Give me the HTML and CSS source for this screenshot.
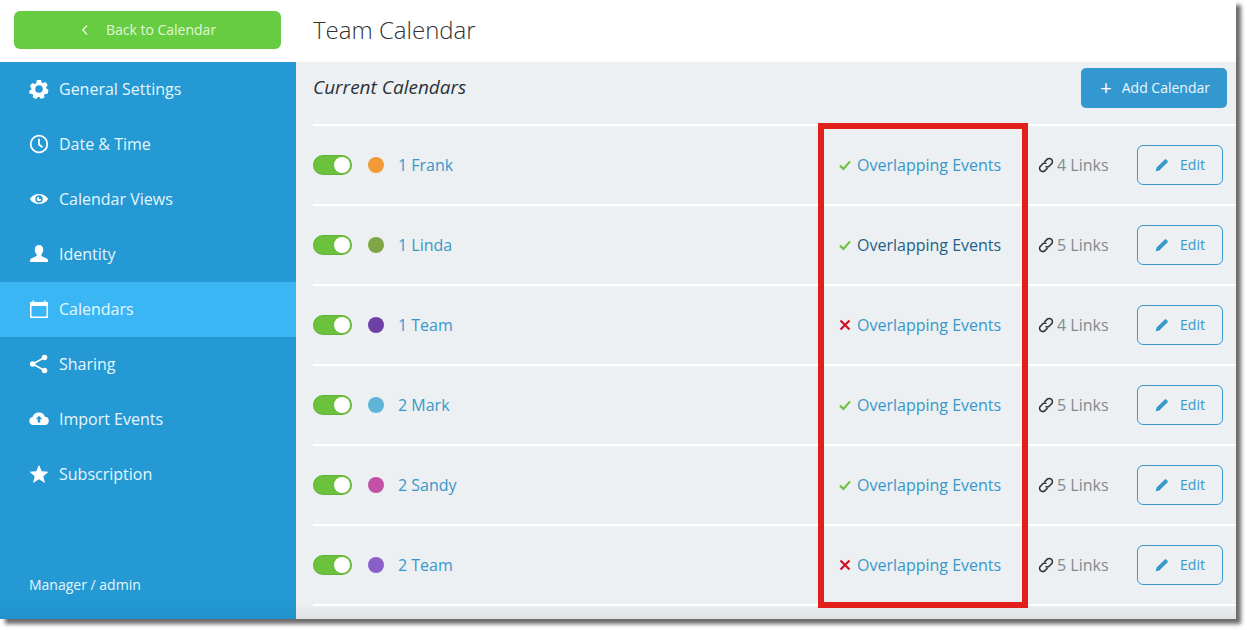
FILE: index.html
```html
<!DOCTYPE html>
<html lang="en">
<head>
    <meta charset="UTF-8">
    <title>Team Calendar</title>
    <link rel="stylesheet" href="styles.css">
</head>
<body>
    <svg class="defs" width="0" height="0">
        <symbol id="i-check" viewBox="0 0 12 12"><path d="M1 6.6 4.4 10 11 2.4" fill="none" stroke="currentColor" stroke-width="2.2"/></symbol>
        <symbol id="i-cross" viewBox="0 0 12 12"><path d="M1.5 1.5 10.5 10.5M10.5 1.5 1.5 10.5" fill="none" stroke="currentColor" stroke-width="2.2"/></symbol>
        <symbol id="i-link" viewBox="1 1 14 14"><g fill="none" stroke="currentColor" stroke-width="1.3"><path d="M6.6 5.4 8.9 3.1a2.7 2.7 0 0 1 3.9 0 2.7 2.7 0 0 1 0 3.9L11 8.9a2.7 2.7 0 0 1-3.4.3"/><path d="M9.4 10.6 7.1 12.9a2.7 2.7 0 0 1-3.9 0 2.7 2.7 0 0 1 0-3.9L5 7.1a2.7 2.7 0 0 1 3.4-.3"/></g></symbol>
        <symbol id="i-pencil" viewBox="0 0 14 14"><path d="M.8 13.2 1.6 9.6 9.8 1.4a1 1 0 0 1 1.4 0l1.4 1.4a1 1 0 0 1 0 1.4L4.4 12.4Z" fill="currentColor"/></symbol>
    </svg>

    <div class="window">
        <aside class="sidebar">
            <div class="back-wrap">
                <a class="back-btn">
                    <svg class="back-icon" viewBox="0 0 8 12"><path d="M6 1.5 1.8 6 6 10.5" fill="none" stroke="currentColor" stroke-width="1.5"/></svg>
                    Back to Calendar
                </a>
            </div>
            <nav class="menu">
                <a class="menu-item">
                    <svg class="menu-icon" viewBox="0 0 20 20"><path fill-rule="evenodd" fill="currentColor" d="M8 1h4l.6 2.5 1.4.6 2.3-1.2 2.5 3-1.600 2 .2 1.600 2.100 1.400-.9 3.800-2.600.2-1 1.200.5 2.500-3.600 1.400-1.500-2.100h-1.600l-1.500 2.100-3.600-1.400.5-2.500-1-1.200-2.600-.2L.1 11.900l2.100-1.400.2-1.600-1.600-2 2.500-3L5.600 5.100 7 4.500ZM10 6.200a3.800 3.800 0 1 0 0 7.600 3.800 3.800 0 0 0 0-7.600Z"/></svg>
                    General Settings
                </a>
                <a class="menu-item">
                    <svg class="menu-icon" viewBox="0 0 20 20"><circle cx="10" cy="10" r="8.300" fill="none" stroke="currentColor" stroke-width="1.800"/><path d="M10 4.800V10.500L13.600 13.400" fill="none" stroke="currentColor" stroke-width="1.800"/></svg>
                    Date &amp; Time
                </a>
                <a class="menu-item">
                    <svg class="menu-icon" viewBox="0 0 20 20"><path fill-rule="evenodd" fill="currentColor" d="M.8 10C3 6.500 6.300 4.900 10 4.900s7 1.600 9.200 5.100C17 13.500 13.700 15.100 10 15.100S3 13.500.8 10ZM10 6.300a3.700 3.700 0 1 0 0 7.400 3.700 3.700 0 0 0 0-7.400Z"/><path fill="currentColor" d="M10 7.800a2.200 2.200 0 1 0 2.200 2.200H10Z"/></svg>
                    Calendar Views
                </a>
                <a class="menu-item">
                    <svg class="menu-icon" viewBox="0 0 20 20"><path fill="currentColor" d="M10 1c2.700 0 4.200 2 4.200 4.600 0 2-.8 3.800-1.900 4.800-.3.900.1 1.600 1.100 2.100 2 .9 5 1.700 5.600 3.500V18H1v-2c.6-1.800 3.600-2.600 5.600-3.500 1-.5 1.400-1.200 1.100-2.100-1.100-1-1.900-2.800-1.900-4.800C5.800 3 7.300 1 10 1Z"/></svg>
                    Identity
                </a>
                <a class="menu-item active">
                    <svg class="menu-icon" viewBox="0 0 20 20"><path fill-rule="evenodd" fill="currentColor" d="M1 3H3.500V1.500H5V3H15V1.500H16.500V3H19V19H1ZM2.500 7V17.500H17.500V7Z"/></svg>
                    Calendars
                </a>
                <a class="menu-item">
                    <svg class="menu-icon" viewBox="0 0 20 20"><g fill="currentColor"><circle cx="15.500" cy="3.500" r="2.800"/><circle cx="3.700" cy="10" r="2.800"/><circle cx="15.500" cy="16.500" r="2.800"/></g><path d="M15.500 3.500 3.700 10 15.500 16.500" fill="none" stroke="currentColor" stroke-width="1.600"/></svg>
                    Sharing
                </a>
                <a class="menu-item">
                    <svg class="menu-icon" viewBox="0 0 20 20"><path fill-rule="evenodd" fill="currentColor" d="M4.500 16a4 4 0 0 1-1-7.900A6.700 6.700 0 0 1 10 3.500a6 6 0 0 1 5.800 4.300A4.100 4.100 0 0 1 15.500 16ZM10 6.800 6.700 10.300H8.800V13.500H11.200V10.300H13.300Z"/></svg>
                    Import Events
                </a>
                <a class="menu-item">
                    <svg class="menu-icon" viewBox="0 0 20 20"><path fill="currentColor" d="M10 .8 12.700 7.200 19.500 7.700 14.300 12.200 16 19 10 15.300 4 19 5.700 12.200.5 7.700 7.300 7.200Z"/></svg>
                    Subscription
                </a>
            </nav>
            <div class="user">Manager / admin</div>
        </aside>

        <main class="main">
            <header class="topbar"><h1>Team Calendar</h1></header>
            <section class="content">
                <div class="content-head">
                    <h2>Current Calendars</h2>
                    <a class="add-btn"><span class="plus">+</span>Add Calendar</a>
                </div>
                <div class="list">
                    <div class="row">
                        <span class="toggle"></span>
                        <span class="dot dot-frank"></span>
                        <a class="name">1 Frank</a>
                        <span class="overlap"><svg class="mark yes"><use href="#i-check"/></svg><a>Overlapping Events</a></span>
                        <span class="links"><svg class="link-icon"><use href="#i-link"/></svg>4 Links</span>
                        <a class="edit-btn"><svg class="pencil"><use href="#i-pencil"/></svg><span class="edit-label">Edit</span></a>
                    </div>
                    <div class="row">
                        <span class="toggle"></span>
                        <span class="dot dot-linda"></span>
                        <a class="name">1 Linda</a>
                        <span class="overlap hover"><svg class="mark yes"><use href="#i-check"/></svg><a>Overlapping Events</a></span>
                        <span class="links"><svg class="link-icon"><use href="#i-link"/></svg>5 Links</span>
                        <a class="edit-btn"><svg class="pencil"><use href="#i-pencil"/></svg><span class="edit-label">Edit</span></a>
                    </div>
                    <div class="row">
                        <span class="toggle"></span>
                        <span class="dot dot-team1"></span>
                        <a class="name">1 Team</a>
                        <span class="overlap"><svg class="mark no"><use href="#i-cross"/></svg><a>Overlapping Events</a></span>
                        <span class="links"><svg class="link-icon"><use href="#i-link"/></svg>4 Links</span>
                        <a class="edit-btn"><svg class="pencil"><use href="#i-pencil"/></svg><span class="edit-label">Edit</span></a>
                    </div>
                    <div class="row">
                        <span class="toggle"></span>
                        <span class="dot dot-mark"></span>
                        <a class="name">2 Mark</a>
                        <span class="overlap"><svg class="mark yes"><use href="#i-check"/></svg><a>Overlapping Events</a></span>
                        <span class="links"><svg class="link-icon"><use href="#i-link"/></svg>5 Links</span>
                        <a class="edit-btn"><svg class="pencil"><use href="#i-pencil"/></svg><span class="edit-label">Edit</span></a>
                    </div>
                    <div class="row">
                        <span class="toggle"></span>
                        <span class="dot dot-sandy"></span>
                        <a class="name">2 Sandy</a>
                        <span class="overlap"><svg class="mark yes"><use href="#i-check"/></svg><a>Overlapping Events</a></span>
                        <span class="links"><svg class="link-icon"><use href="#i-link"/></svg>5 Links</span>
                        <a class="edit-btn"><svg class="pencil"><use href="#i-pencil"/></svg><span class="edit-label">Edit</span></a>
                    </div>
                    <div class="row">
                        <span class="toggle"></span>
                        <span class="dot dot-team2"></span>
                        <a class="name">2 Team</a>
                        <span class="overlap"><svg class="mark no"><use href="#i-cross"/></svg><a>Overlapping Events</a></span>
                        <span class="links"><svg class="link-icon"><use href="#i-link"/></svg>5 Links</span>
                        <a class="edit-btn"><svg class="pencil"><use href="#i-pencil"/></svg><span class="edit-label">Edit</span></a>
                    </div>
                </div>
            </section>
        </main>

        <div class="callout"></div>
    </div>
</body>
</html>
```

FILE: styles.css
```css
* {
    box-sizing: border-box;
}
body {
    margin: 0;
    height: 630px;
    overflow: hidden;
    background-color: #fff;
    font-family: "Open Sans", "Liberation Sans", sans-serif;
}
.defs {
    position: absolute;
}
.window {
    position: relative;
    display: flex;
    width: 1236px;
    height: 619px;
    box-shadow: 5px 5px 4px rgba(50, 50, 50, 0.72);
}

/* sidebar */
.sidebar {
    display: flex;
    flex-direction: column;
    width: 296px;
    background: linear-gradient(#2499d3 96%, #2093cc);
    color: #e6f6fd;
}
.back-wrap {
    height: 62px;
    padding: 11px 15px 0 14px;
    background-color: #fff;
}
.back-btn {
    display: flex;
    align-items: center;
    justify-content: center;
    height: 38px;
    padding: 0 0 2px 2px;
    border-radius: 6px;
    background-color: #66cc41;
    color: #e2f7d6;
    font-size: 14px;
}
.back-icon {
    width: 8px;
    height: 12px;
    margin: 2px 17px 0 0;
}
.menu {
    flex: 1;
}
.menu-item {
    display: flex;
    align-items: center;
    height: 55px;
    padding: 0 0 2px 29px;
    font-size: 16px;
}
.menu-item.active {
    background-color: #3bb6f5;
}
.menu-icon {
    width: 20px;
    height: 20px;
    margin-right: 10px;
    color: #fff;
}
.user {
    height: 69px;
    padding: 25px 0 0 29px;
    font-size: 14px;
}

/* main */
.main {
    flex: 1;
    display: flex;
    flex-direction: column;
}
.topbar {
    height: 62px;
    padding: 0 0 0 17px;
    background-color: #fff;
}
h1 {
    margin: 0;
    font-size: 24px;
    font-weight: 300;
    line-height: 59px;
    color: #333;
}
.content {
    flex: 1;
    padding-left: 17px;
    background: linear-gradient(#ecf0f2 97%, #e0e3e5);
}
.content-head {
    display: flex;
    justify-content: space-between;
    height: 62px;
    padding: 6px 9px 0 0;
}
h2 {
    margin: 0;
    font-size: 19px;
    font-weight: 400;
    font-style: italic;
    line-height: 38px;
    color: #2b3238;
}
.add-btn {
    display: flex;
    align-items: center;
    height: 40px;
    padding: 0 17px 2px 19px;
    border-radius: 5px;
    background-color: #3498d0;
    color: #eaf6fc;
    font-size: 14px;
}
.plus {
    margin: 2px 10px 0 0;
    color: #fff;
    font-size: 20px;
    line-height: 1;
}
.list {
    border-top: 2px solid #fff;
}
.row {
    display: flex;
    align-items: center;
    height: 80px;
    padding-right: 13px;
    border-bottom: 2px solid #fff;
}
.toggle {
    position: relative;
    width: 39px;
    height: 20px;
    border-radius: 10px;
    background-color: #6cc13d;
    box-shadow: inset 0 0 0 1px rgba(70, 120, 40, 0.2);
}
.toggle::after {
    content: "";
    position: absolute;
    top: 2px;
    right: 2px;
    width: 16px;
    height: 16px;
    border-radius: 50%;
    background-color: #fff;
}
.dot {
    width: 16px;
    height: 16px;
    margin: 0 14px 0 16px;
    border-radius: 50%;
}
.dot-frank { background-color: #f09b37; }
.dot-linda { background-color: #7fa646; }
.dot-team1 { background-color: #6f3fa8; }
.dot-mark { background-color: #5fb4d8; }
.dot-sandy { background-color: #c250a4; }
.dot-team2 { background-color: #8a60c8; }
.name {
    flex: 1;
    font-size: 16px;
    color: #3a97c9;
}
.overlap {
    display: flex;
    align-items: center;
    width: 199px;
    font-size: 16px;
    color: #3a97c9;
}
.overlap.hover {
    color: #245f85;
}
.mark {
    width: 12px;
    height: 12px;
    margin-right: 6px;
}
.mark.yes { color: #6cc13d; }
.mark.no { color: #d0112b; }
.links {
    display: flex;
    align-items: center;
    width: 99px;
    font-size: 16px;
    color: #858a8d;
}
.link-icon {
    width: 16px;
    height: 16px;
    margin-right: 3px;
    color: #2b3238;
}
.edit-btn {
    display: flex;
    align-items: center;
    justify-content: center;
    width: 86px;
    height: 40px;
    border: 1px solid #3a97c9;
    border-radius: 6px;
    color: #3a97c9;
    font-size: 14px;
}
.edit-label {
    margin-top: -2px;
}
.pencil {
    width: 14px;
    height: 14px;
    margin-right: 11px;
}

/* annotation drawn over the screenshot */
.callout {
    position: absolute;
    left: 818px;
    top: 123px;
    width: 210px;
    height: 485px;
    border: 6px solid #e1201c;
}
```
